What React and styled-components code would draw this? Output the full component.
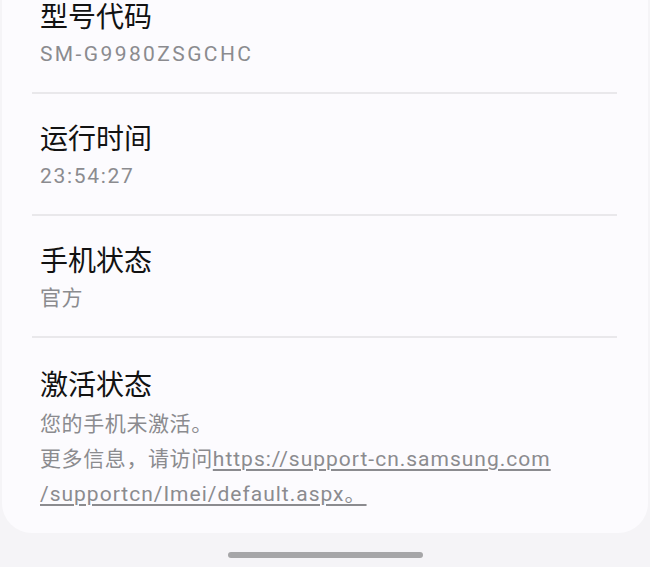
import styled, { createGlobalStyle } from 'styled-components'

const GlobalStyle = createGlobalStyle`
  html, body {
    margin: 0;
    padding: 0;
    background: #f5f4f7;
  }
  body {
    font-family: Roboto, "Noto Sans CJK SC", sans-serif;
    -webkit-font-smoothing: antialiased;
  }
`

const rows = [
  { title: '型号代码', value: 'SM-G9980ZSGCHC', spacing: 2.4 },
  { title: '运行时间', value: '23:54:27', spacing: 1.7 },
  { title: '手机状态', value: '官方' },
]

const App = () => {
  return (
    <Page>
      <GlobalStyle />
      <Card>
        {rows.map(row => (
          <Row key={row.title}>
            <Title>{row.title}</Title>
            <Value $spacing={row.spacing}>{row.value}</Value>
          </Row>
        ))}
        <Row $last>
          <Title>激活状态</Title>
          <Value $multi>您的手机未激活。</Value>
          <Value $multi>
            更多信息，请访问<Link>https://support-cn.samsung.com<br />/supportcn/Imei/default.aspx。</Link>
          </Value>
        </Row>
      </Card>
      <HomeBar />
    </Page>
  )
}

const Page = styled.div`
  width: 650px;
  height: 567px;
  box-sizing: border-box;
  padding: 0 2px;
  display: flex;
  flex-direction: column;
  align-items: center;
  overflow: hidden;
`

const Card = styled.div`
  align-self: stretch;
  background: #fcfbfe;
  border-radius: 0 0 30px 30px;
  padding: 0 31px 21px 30px;
`

const Row = styled.div`
  display: flex;
  flex-direction: column;
  padding: ${p => (p.$last ? '30px 8px 0' : '28px 8px 20px')};
  border-bottom: ${p => (p.$last ? 'none' : '2px solid #e9e8eb')};

  &:first-child {
    padding-top: 0;
  }
`

const Title = styled.div`
  font-size: 28px;
  line-height: 36px;
  color: #121212;
`

const Value = styled.div`
  font-size: 21px;
  line-height: ${p => (p.$multi ? '35px' : '36px')};
  color: #8b8b8f;
  letter-spacing: ${p => p.$spacing ?? 0.6}px;

  ${Title} + & {
    margin-top: ${p => (p.$multi ? '3px' : '0')};
  }
`

const Link = styled.span`
  letter-spacing: 1px;
  text-decoration: underline;
  text-decoration-thickness: 2px;
  text-underline-offset: 3px;
`

const HomeBar = styled.div`
  margin-top: 19px;
  width: 195px;
  height: 6px;
  border-radius: 3px;
  background: #a6a6a8;
`

export default App
